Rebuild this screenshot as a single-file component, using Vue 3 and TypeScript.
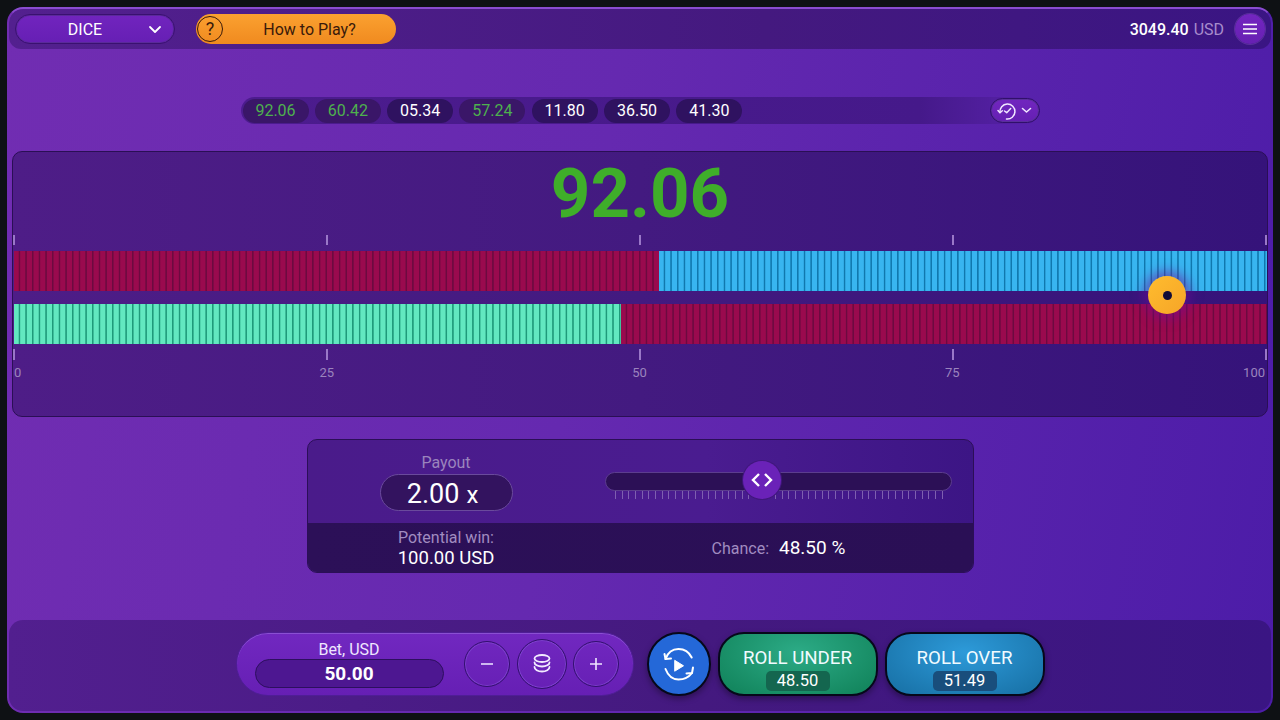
<script setup lang="ts">
interface HistoryItem {
  value: string;
  win: boolean;
}

const history: HistoryItem[] = [
  { value: '92.06', win: true },
  { value: '60.42', win: true },
  { value: '05.34', win: false },
  { value: '57.24', win: true },
  { value: '11.80', win: false },
  { value: '36.50', win: false },
  { value: '41.30', win: false },
];

const scale = [0, 25, 50, 75, 100];

// bar runs 0-100 over about 1252px
const barWidth = 1252;
const rollResult = 92.1;
const underPct = 48.5;
const overFrom = 51.49;

const px = (pct: number) => `${(pct / 100) * barWidth}px`;
</script>

<template>
  <div class="frame">
    <header class="topbar">
      <button type="button" class="game-select">
        <span>DICE</span>
        <svg class="chev" width="14" height="9" viewBox="0 0 14 9"><path d="M2 2l5 5 5-5" fill="none" stroke="#fff" stroke-width="1.8" stroke-linecap="round" stroke-linejoin="round" /></svg>
      </button>
      <button type="button" class="how">
        <span class="how-q">?</span>
        <span class="how-text">How to Play?</span>
      </button>
      <div class="balance"><b>3049.40</b> <span>USD</span></div>
      <button type="button" class="menu">
        <svg width="14" height="12" viewBox="0 0 14 12"><path d="M0 1.500h14M0 6h14M0 10.500h14" stroke="#fff" stroke-width="1.6" /></svg>
      </button>
    </header>

    <div class="history">
      <span v-for="item in history" :key="item.value" class="chip" :class="{ green: item.win }">{{ item.value }}</span>
      <button type="button" class="history-btn">
        <svg width="20" height="20" viewBox="0 0 20 20" fill="none" stroke="#f0e6ff" stroke-width="1.5" stroke-linecap="round" stroke-linejoin="round">
          <path d="M3 11.500A7.500 7.500 0 1 1 9.500 18" />
          <path d="M1 9.500l2 2.300 2.300-2" />
          <path d="M7.500 10l2.200 1.700 4-4.200" />
        </svg>
        <svg width="11" height="7" viewBox="0 0 11 7"><path d="M1.500 1.500L5.500 5l4-3.500" fill="none" stroke="#f0e6ff" stroke-width="1.600" stroke-linecap="round" stroke-linejoin="round" /></svg>
      </button>
    </div>

    <section class="board">
      <div class="result">92.06</div>
      <div class="ticks"><i v-for="n in scale" :key="n"></i></div>
      <div class="track">
        <div class="bar top">
          <div class="seg red" :style="{ width: px(overFrom) }"></div>
          <div class="seg blue"></div>
        </div>
        <div class="bar bottom">
          <div class="seg green" :style="{ width: px(underPct) }"></div>
          <div class="seg red"></div>
        </div>
        <div class="ball" :style="{ left: px(rollResult) }"><span></span></div>
      </div>
      <div class="ticks low"><i v-for="n in scale" :key="n"></i></div>
      <div class="labels"><span v-for="n in scale" :key="n"><em>{{ n }}</em></span></div>
    </section>

    <section class="payout">
      <div class="payout-top">
        <div class="payout-field">
          <label>Payout</label>
          <div class="payout-value">2.00<small>x</small></div>
        </div>
        <div class="slider">
          <div class="slider-track"></div>
          <div class="slider-ticks"></div>
          <div class="slider-knob">
            <svg width="24" height="16" viewBox="0 0 24 16"><path d="M9 2L3 8l6 6M15 2l6 6-6 6" fill="none" stroke="#fff" stroke-width="2.400" /></svg>
          </div>
        </div>
      </div>
      <div class="payout-bottom">
        <div class="potential">
          <span>Potential win:</span>
          <b>100.00 USD</b>
        </div>
        <div class="chance">
          <span>Chance:</span>
          <b>48.50 %</b>
        </div>
      </div>
    </section>

    <footer class="controls">
      <div class="bet">
        <div class="bet-field">
          <label>Bet, USD</label>
          <div class="bet-input">50.00</div>
        </div>
        <button type="button" class="round">
          <svg width="14" height="14" viewBox="0 0 14 14"><path d="M1 7h12" stroke="#e8dcff" stroke-width="1.600" /></svg>
        </button>
        <button type="button" class="round big">
          <svg width="18" height="20" viewBox="0 0 18 20" fill="none" stroke="#f2eaff" stroke-width="1.800" stroke-linecap="round">
            <ellipse cx="9" cy="4.500" rx="7.500" ry="3.500" />
            <path d="M1.500 8.500c0 2.200 3.300 4 7.500 4s7.500-1.800 7.500-4" />
            <path d="M1.500 13c0 2.400 3.300 4.500 7.500 4.500s7.500-2.100 7.500-4.500" />
          </svg>
        </button>
        <button type="button" class="round">
          <svg width="14" height="14" viewBox="0 0 14 14"><path d="M1 7h12M7 1v12" stroke="#efe6ff" stroke-width="1.600" /></svg>
        </button>
      </div>

      <button type="button" class="replay">
        <svg width="32" height="33" viewBox="0 0 32 33" fill="none" stroke="#fff" stroke-width="2" stroke-linecap="round" stroke-linejoin="round">
          <path d="M28.700 9.500C26 4 21 1 15.500 1 10 1 5 4 2.500 11" />
          <path d="M1.500 6l1 5 5.500-.5" />
          <path d="M2.500 21c2.500 6.500 7.500 10.500 13 10.500 5.500 0 10.500-2.500 13.500-6.500" />
          <path d="M23.500 25.500L29 25l1-5.500" />
          <path d="M12 12.500l8.500 5.300L12 23z" fill="#fff" stroke-width="1" />
        </svg>
      </button>
      <button type="button" class="roll under">
        <span>ROLL UNDER</span>
        <b>48.50</b>
      </button>
      <button type="button" class="roll over">
        <span>ROLL OVER</span>
        <b>51.49</b>
      </button>
    </footer>
  </div>
</template>

<style>
html,
body {
  margin: 0;
  background: #0e1114;
}
</style>

<style scoped>
.frame {
  box-sizing: border-box;
  width: 1266px;
  height: 706px;
  margin: 7px;
  display: flex;
  flex-direction: column;
  border: 2px solid transparent;
  border-top-color: #8a4cd0;
  border-radius: 16px;
  background: linear-gradient(100deg, #712db2 0%, #6529b0 45%, #4c1ca8 100%) border-box;
  font-family: Roboto, "Liberation Sans", sans-serif;
  color: #fff;
  overflow: hidden;
}

button {
  font-family: inherit;
  color: inherit;
  padding: 0;
  cursor: pointer;
}

.topbar {
  flex: none;
  height: 40px;
  display: flex;
  align-items: center;
  padding: 0 6px;
  background: linear-gradient(90deg, #53208f, #44197f 60%, #3a1583);
  border-radius: 14px 14px 12px 12px;
}

.game-select {
  width: 160px;
  height: 30px;
  margin-right: 21px;
  position: relative;
  font-size: 16px;
  background: linear-gradient(#7124be, #661fb4);
  border: 1px solid #3a1170;
  border-radius: 15px;
  box-shadow: 0 0 0 1px #5a2a9a inset;
}

.game-select > span {
  display: inline-block;
  margin-right: 20px;
}

.chev {
  position: absolute;
  right: 12px;
  top: 10px;
}

.how {
  width: 200px;
  height: 30px;
  display: flex;
  align-items: center;
  background: linear-gradient(#fba130, #f08a1f);
  border: none;
  border-radius: 15px;
  color: #3a1a0a;
  font-size: 16px;
}

.how-q {
  box-sizing: border-box;
  width: 26px;
  height: 26px;
  margin-left: 1px;
  border: 1.500px solid #3a1a0a;
  border-radius: 50%;
  font-size: 18px;
  line-height: 23px;
}

.how-text {
  flex: 1;
}

.balance {
  margin-left: auto;
  margin-right: 11px;
  font-size: 16px;
}

.balance b {
  font-weight: 500;
}

.balance span {
  color: #a78ccc;
  margin-left: 1px;
}

.menu {
  width: 30px;
  height: 30px;
  display: grid;
  place-items: center;
  border: none;
  border-radius: 50%;
  background: linear-gradient(#7325c0, #6620b2);
  box-shadow: 0 0 0 1px #5a2f9c;
}

.history {
  flex: none;
  align-self: center;
  box-sizing: border-box;
  width: 799px;
  height: 27px;
  margin-top: 48px;
  display: flex;
  align-items: center;
  gap: 6.300px;
  padding-left: 2px;
  background: linear-gradient(90deg, #4c1c8e, #45198a 85%, rgba(69, 25, 138, 0));
  border-radius: 14px;
}

.chip {
  width: 66px;
  height: 24px;
  line-height: 24px;
  text-align: center;
  font-size: 16px;
  border-radius: 12px;
  background: #2f1260;
}

.chip.green {
  color: #4eb04e;
  background: #3a1668;
}

.history-btn {
  margin-left: auto;
  width: 50px;
  height: 25px;
  display: flex;
  align-items: center;
  justify-content: center;
  gap: 4px;
  border: 1px solid #30106a;
  border-radius: 13px;
  background: linear-gradient(#7126bf, #651fb3);
  box-shadow: 0 0 0 1px #5a2f9c inset;
}

.board {
  flex: none;
  box-sizing: border-box;
  height: 266px;
  margin: 27px 3px 0;
  border: 1px solid #2a0f55;
  border-radius: 10px;
  background: linear-gradient(90deg, #4e1d87, #431a80 50%, #35137a);
}

.result {
  height: 83px;
  line-height: 84px;
  text-align: center;
  font-size: 69px;
  font-weight: 700;
  color: #3fae2a;
}

.ticks {
  height: 10px;
  display: flex;
  justify-content: space-between;
}

.ticks.low {
  height: 11px;
}

.ticks i {
  width: 2px;
  background: #9a78c8;
}

.track {
  position: relative;
  margin: 6px 0 5px 1px;
}

.bar {
  height: 40px;
  display: flex;
}

.bar.bottom {
  margin-top: 13px;
}

.seg {
  height: 100%;
}

.seg:last-child {
  flex: 1;
}

.seg.red {
  background: repeating-linear-gradient(90deg, #9a0a4e 0 4.300px, #6c0a40 5px 5.700px, #9a0a4e 6.670px);
}

.seg.blue {
  background: repeating-linear-gradient(90deg, #38b5f0 0 4.300px, #1078ae 5px 5.700px, #38b5f0 6.670px);
}

.seg.green {
  background: repeating-linear-gradient(90deg, #62e8c0 0 4.300px, #1f9a7a 5px 5.700px, #62e8c0 6.670px);
}

.ball {
  position: absolute;
  top: 25px;
  width: 38px;
  height: 38px;
  margin-left: -19px;
  display: grid;
  place-items: center;
  border-radius: 50%;
  background: linear-gradient(135deg, #ffbc2e, #f6a528);
  box-shadow: 0 0 12px 5px rgba(110, 10, 150, 0.55);
}

.ball span {
  width: 9px;
  height: 9px;
  border-radius: 50%;
  background: #120c38;
}

.labels {
  display: flex;
  justify-content: space-between;
  margin-top: 5px;
  padding: 0 1px;
  font-size: 13px;
  line-height: 15px;
  color: #9b84bd;
}

.labels span {
  width: 0;
  display: flex;
  justify-content: center;
  white-space: nowrap;
}

.labels span:first-child {
  justify-content: flex-start;
}

.labels span:last-child {
  justify-content: flex-end;
  margin-right: 1px;
}

.labels em {
  font-style: normal;
}

.payout {
  flex: none;
  align-self: center;
  box-sizing: border-box;
  width: 667px;
  height: 134px;
  margin-top: 22px;
  display: flex;
  flex-direction: column;
  border: 1px solid #2b0f57;
  border-radius: 10px;
  overflow: hidden;
  background: linear-gradient(90deg, #4a1b8a, #4a1c90 60%, #3c1585);
}

.payout-top {
  height: 83px;
  display: flex;
  position: relative;
}

.payout-field {
  width: 277px;
  display: flex;
  flex-direction: column;
  align-items: center;
  padding-top: 14px;
}

.payout-field label {
  font-size: 16px;
  line-height: 18px;
  color: #9b84bd;
}

.payout-value {
  box-sizing: border-box;
  width: 133px;
  height: 37px;
  margin-top: 2px;
  padding-right: 7px;
  line-height: 38px;
  text-align: center;
  font-size: 27px;
  border: 1px solid #6a4a9c;
  border-radius: 19px;
  background: #33135f;
}

.payout-value small {
  font-size: 24px;
  margin-left: 7px;
}

.slider {
  position: relative;
  width: 347px;
  margin-left: 20px;
}

.slider-track {
  box-sizing: border-box;
  height: 19px;
  margin-top: 32px;
  border: 1px solid #5c3d8e;
  border-radius: 10px;
  background: #2c1056;
}

.slider-ticks {
  height: 8px;
  margin: 0 6px 0 10px;
  background: repeating-linear-gradient(90deg, #7e5fb0 0 1px, transparent 1px 6.670px);
}

.slider-knob {
  position: absolute;
  left: 138px;
  top: 21px;
  width: 38px;
  height: 38px;
  display: grid;
  place-items: center;
  border-radius: 50%;
  background: #6a22b8;
  box-shadow: 0 0 0 1px #40177c;
}

.payout-bottom {
  flex: 1;
  display: flex;
  align-items: center;
  background: linear-gradient(90deg, #2c1058, #2a0f55);
}

.potential {
  width: 277px;
  display: flex;
  flex-direction: column;
  align-items: center;
  font-size: 18.500px;
  line-height: 21px;
}

.potential span {
  font-size: 16px;
  color: #a18cc0;
}

.potential b,
.chance b {
  font-weight: 400;
}

.chance {
  margin-left: 127px;
  font-size: 19px;
  display: flex;
  align-items: baseline;
  gap: 10px;
}

.chance span {
  font-size: 16px;
  color: #a18cc0;
}

.controls {
  flex: none;
  box-sizing: border-box;
  height: 91px;
  margin-top: auto;
  padding-top: 12px;
  display: flex;
  justify-content: center;
  align-items: flex-start;
  background: linear-gradient(90deg, #521f8f, #44197f 55%, #3a1583);
  border-radius: 14px 14px 12px 12px;
}

.bet {
  box-sizing: border-box;
  width: 398px;
  height: 64px;
  display: flex;
  align-items: center;
  padding-left: 18px;
  border: 1px solid #4f1e96;
  border-radius: 32px;
  background: linear-gradient(#7128c0, #661fb4);
  box-shadow: 0 1px 0 #8a4fd2 inset;
  margin-right: 13px;
}

.bet-field {
  width: 189px;
  margin-right: 20px;
  text-align: center;
}

.bet-field label {
  display: block;
  font-size: 16px;
  line-height: 20px;
  color: #efe6ff;
}

.bet-input {
  box-sizing: border-box;
  height: 29px;
  margin-top: -1px;
  line-height: 27px;
  font-size: 19px;
  font-weight: 700;
  border: 1px solid #2d0f5f;
  border-radius: 15px;
  background: #4d1791;
}

.round {
  width: 46px;
  height: 46px;
  flex: none;
  display: grid;
  place-items: center;
  border: 1px solid #33106f;
  border-radius: 50%;
  background: transparent;
  box-shadow: 0 0 0 1px #7d3fcc inset;
  margin-right: 7px;
}

.round.big {
  width: 50px;
  height: 50px;
  margin-right: 6px;
}

.replay {
  box-sizing: border-box;
  width: 64px;
  height: 64px;
  flex: none;
  display: grid;
  place-items: center;
  border: 2px solid #06081a;
  border-radius: 50%;
  background: #2468d8;
  margin-right: 7px;
  box-shadow: 0 3px 6px rgba(0, 0, 0, 0.35);
}

.roll {
  box-sizing: border-box;
  width: 160px;
  height: 64px;
  display: flex;
  flex-direction: column;
  align-items: center;
  padding-top: 13px;
  border: 2px solid #06081a;
  border-radius: 26px;
  box-shadow: 0 3px 6px rgba(0, 0, 0, 0.35);
  font-size: 18.700px;
  line-height: 22px;
}

.roll span {
  color: #f0fbff;
}

.roll b {
  width: 64px;
  height: 20px;
  margin-top: 2px;
  line-height: 20px;
  font-size: 16.500px;
  font-weight: 400;
  border-radius: 5px;
}

.roll.under {
  margin-right: 7px;
  background: radial-gradient(ellipse at 50% 30%, #2cab86, #14875f 85%);
}

.roll.under b {
  background: #14664f;
}

.roll.over {
  background: radial-gradient(ellipse at 50% 30%, #2d9ad9, #1a75ab 85%);
}

.roll.over b {
  background: #194e7c;
}
</style>
